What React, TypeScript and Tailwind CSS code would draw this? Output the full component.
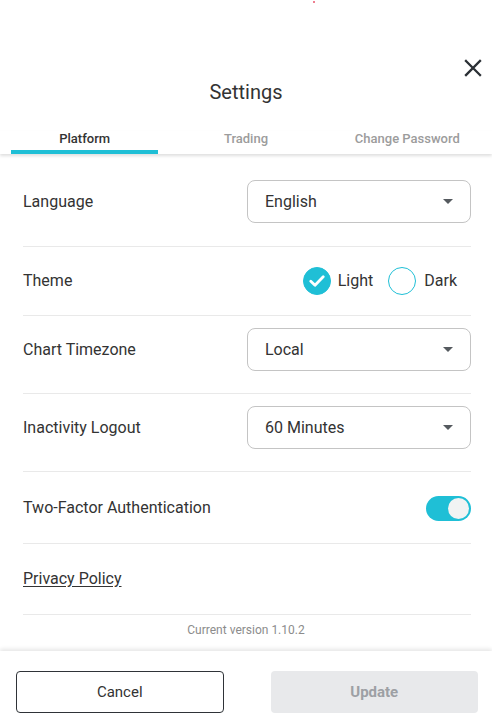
import { useState } from "react";

const TABS = ["Platform", "Trading", "Change Password"];

function Caret() {
  return (
    <svg width="10" height="5" viewBox="0 0 10 5" className="shrink-0">
      <path d="M0 0h10L5 5z" fill="#555a5f" />
    </svg>
  );
}

function SelectBox({ value }: { value: string }) {
  return (
    <button
      type="button"
      className="flex h-[43px] w-[224px] items-center justify-between rounded-[8px] border border-[#c4c4c4] pl-[17px] pr-[17px] text-left text-[16px] leading-[20px] text-[#333]"
    >
      <span>{value}</span>
      <Caret />
    </button>
  );
}

export default function App() {
  const [tab, setTab] = useState(0);
  const [theme, setTheme] = useState<"light" | "dark">("light");
  const [twoFactor, setTwoFactor] = useState(true);

  return (
    <div className="relative flex min-h-screen w-[492px] flex-col bg-white font-['Roboto','Liberation_Sans',sans-serif] text-[#333]">
      <span className="absolute left-[313px] top-[1px] h-[2px] w-[2px] rounded-full bg-[#e8556b]" />

      {/* header */}
      <div className="flex justify-end pr-[10px] pt-[59px]">
        <button type="button" aria-label="Close" className="h-[18px] w-[18px]">
          <svg width="18" height="18" viewBox="0 0 18 18">
            <path d="M2 2l14 14M16 2L2 16" stroke="#2b3035" strokeWidth="2.3" strokeLinecap="square" />
          </svg>
        </button>
      </div>
      <h1 className="mt-[3px] text-center text-[20px] leading-[24px] text-[#333]">Settings</h1>

      {/* tabs */}
      <div className="relative z-10 mt-[27px] grid grid-cols-3 px-[4px] shadow-[0_2px_3px_rgba(0,0,0,0.13)]">
        {TABS.map((t, i) => (
          <button key={t} type="button" onClick={() => setTab(i)} className="flex flex-col items-stretch px-[7px]">
            <span
              className={`pb-[3px] text-center text-[13px] font-medium leading-[16px] ${
                tab === i ? "text-[#333]" : "text-[#9c9c9c]"
              }`}
            >
              {t}
            </span>
            <span className={`h-[4px] ${tab === i ? "bg-[#1fbfd6]" : "bg-transparent"}`} />
          </button>
        ))}
      </div>

      {/* rows */}
      <div className="ml-[23px] mr-[21px] flex items-center justify-between border-b border-[#e9e9e9] pb-[23px] pt-[26px]">
        <span className="text-[16px] leading-[20px]">Language</span>
        <SelectBox value="English" />
      </div>

      <div className="ml-[23px] mr-[21px] flex items-center justify-between border-b border-[#e9e9e9] pb-[20px] pt-[20px]">
        <span className="text-[16px] leading-[20px]">Theme</span>
        <div className="mr-[14px] flex items-center">
          <button type="button" onClick={() => setTheme("light")} className="flex items-center gap-[7px]">
            <span
              className={`flex h-[28px] w-[28px] items-center justify-center rounded-full border border-[#1fbfd6] ${
                theme === "light" ? "bg-[#1fbfd6]" : "bg-white"
              }`}
            >
              {theme === "light" && (
                <svg width="16" height="12" viewBox="0 0 16 12">
                  <path d="M1.8 6.2l4.2 4 8.2-8.4" fill="none" stroke="white" strokeWidth="2.8" strokeLinecap="round" strokeLinejoin="round" />
                </svg>
              )}
            </span>
            <span className="text-[16px] leading-[20px]">Light</span>
          </button>
          <button type="button" onClick={() => setTheme("dark")} className="ml-[15px] flex items-center gap-[8px]">
            <span
              className={`flex h-[28px] w-[28px] items-center justify-center rounded-full border border-[#1fbfd6] ${
                theme === "dark" ? "bg-[#1fbfd6]" : "bg-white"
              }`}
            >
              {theme === "dark" && (
                <svg width="16" height="12" viewBox="0 0 16 12">
                  <path d="M1.8 6.2l4.2 4 8.2-8.4" fill="none" stroke="white" strokeWidth="2.8" strokeLinecap="round" strokeLinejoin="round" />
                </svg>
              )}
            </span>
            <span className="text-[16px] leading-[20px]">Dark</span>
          </button>
        </div>
      </div>

      <div className="ml-[23px] mr-[21px] flex items-center justify-between border-b border-[#e9e9e9] pb-[22px] pt-[12px]">
        <span className="text-[16px] leading-[20px]">Chart Timezone</span>
        <SelectBox value="Local" />
      </div>

      <div className="ml-[23px] mr-[21px] flex items-center justify-between border-b border-[#e9e9e9] pb-[22px] pt-[12px]">
        <span className="text-[16px] leading-[20px]">Inactivity Logout</span>
        <SelectBox value="60 Minutes" />
      </div>

      <div className="ml-[23px] mr-[21px] flex items-center justify-between border-b border-[#e9e9e9] pb-[22px] pt-[24px]">
        <span className="-mt-[2px] text-[16px] leading-[20px]">Two-Factor Authentication</span>
        <button
          type="button"
          onClick={() => setTwoFactor(!twoFactor)}
          className={`flex h-[25px] w-[45px] items-center rounded-full px-[2px] ${
            twoFactor ? "justify-end bg-[#1fbfd6]" : "justify-start bg-[#cfd3d6]"
          }`}
        >
          <span className="h-[21px] w-[21px] rounded-full bg-[#f1f3f3]" />
        </button>
      </div>

      <div className="ml-[23px] mr-[21px] border-b border-[#e9e9e9] pb-[23px] pt-[23px]">
        <a href="#" className="text-[16px] leading-[20px] text-[#333] underline underline-offset-[2px]">
          Privacy Policy
        </a>
      </div>

      <p className="flex-1 pt-[7px] text-center text-[12px] leading-[16px] text-[#8c8c8c]">Current version 1.10.2</p>

      {/* footer */}
      <div className="relative grid h-[77px] grid-cols-2 gap-[47px] bg-white pb-[15px] pl-[16px] pr-[14px] pt-[20px] shadow-[0_-2px_4px_rgba(0,0,0,0.1)]">
        <button type="button" className="h-[42px] rounded-[4px] border border-[#2f3338] text-[15px] text-[#333]">
          Cancel
        </button>
        <button type="button" disabled className="h-[42px] rounded-[4px] bg-[#e8e9eb] text-[15px] font-bold text-[#9da0a4]">
          Update
        </button>
      </div>
    </div>
  );
}
